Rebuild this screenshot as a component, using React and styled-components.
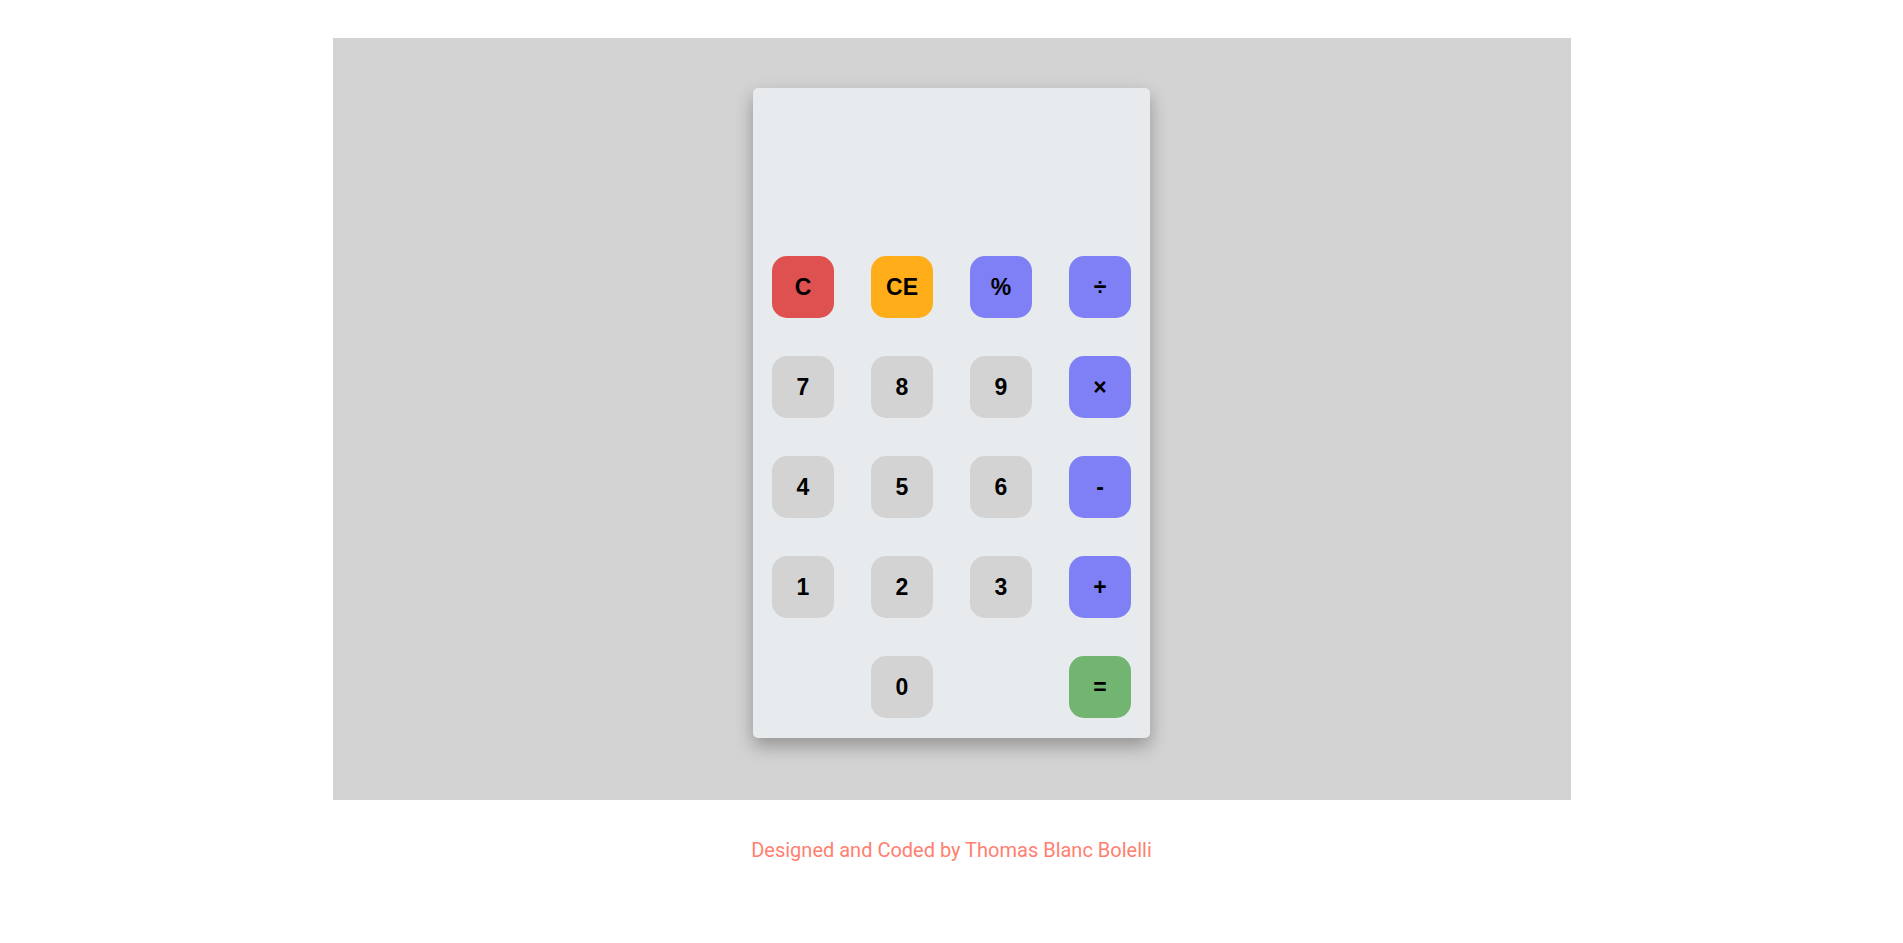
import React from "react";
import styled, { createGlobalStyle } from "styled-components";

const keys = [
  { label: "C", kind: "clear" },
  { label: "CE", kind: "back" },
  { label: "%", kind: "op" },
  { label: "÷", kind: "op" },
  { label: "7" },
  { label: "8" },
  { label: "9" },
  { label: "×", kind: "op" },
  { label: "4" },
  { label: "5" },
  { label: "6" },
  { label: "-", kind: "op" },
  { label: "1" },
  { label: "2" },
  { label: "3" },
  { label: "+", kind: "op" },
  { label: "", kind: "empty" },
  { label: "0" },
  { label: "", kind: "empty" },
  { label: "=", kind: "equal" },
];

const colors = {
  clear: "#df5050",
  back: "#ffad19",
  op: "#7f7ff6",
  equal: "#71b571",
  num: "#d3d3d3",
};

const App = () => {
  return (
    <>
      <GlobalStyle />
      <Page>
        <Stage>
          <Calculator>
            <Display />
            <Keypad>
              {keys.map((k, i) =>
                k.kind === "empty" ? (
                  <Spacer key={i} />
                ) : (
                  <Key key={i} $kind={k.kind || "num"}>
                    {k.label}
                  </Key>
                )
              )}
            </Keypad>
          </Calculator>
        </Stage>
        <Footer>Designed and Coded by Thomas Blanc Bolelli</Footer>
      </Page>
    </>
  );
};

const GlobalStyle = createGlobalStyle`
  body {
    margin: 0;
    background: #ffffff;
    font-family: Roboto, "Liberation Sans", sans-serif;
  }
`;

const Page = styled.div`
  display: flex;
  flex-direction: column;
  align-items: center;
  padding-top: 38px;
`;

const Stage = styled.div`
  width: 1238px;
  height: 762px;
  box-sizing: border-box;
  background-color: #d3d3d3;
  display: flex;
  justify-content: center;
  padding-top: 50px;
`;

const Calculator = styled.div`
  width: 397px;
  height: 650px;
  box-sizing: border-box;
  padding: 19px 19px 0 19px;
  background-color: #e8ebee;
  border-radius: 5px;
  box-shadow: 0 8px 18px rgba(0, 0, 0, 0.3);
  display: flex;
  flex-direction: column;
`;

const Display = styled.div`
  height: 112px;
  margin-bottom: 37px;
`;

const Keypad = styled.div`
  display: grid;
  grid-template-columns: repeat(4, 62px);
  grid-auto-rows: 62px;
  justify-content: space-between;
  row-gap: 38px;
`;

const Key = styled.button`
  border: none;
  border-radius: 15px;
  background-color: ${(p) => colors[p.$kind]};
  font-family: "Liberation Sans", Arial, sans-serif;
  font-weight: 700;
  font-size: 23px;
  color: #000;
  display: flex;
  align-items: center;
  justify-content: center;
  padding: 0;
  cursor: pointer;
`;

const Spacer = styled.div``;

const Footer = styled.p`
  margin: 38px 0 0 0;
  color: #ff8070;
  font-family: Roboto, "Liberation Sans", sans-serif;
  font-size: 20px;
`;

export default App;
